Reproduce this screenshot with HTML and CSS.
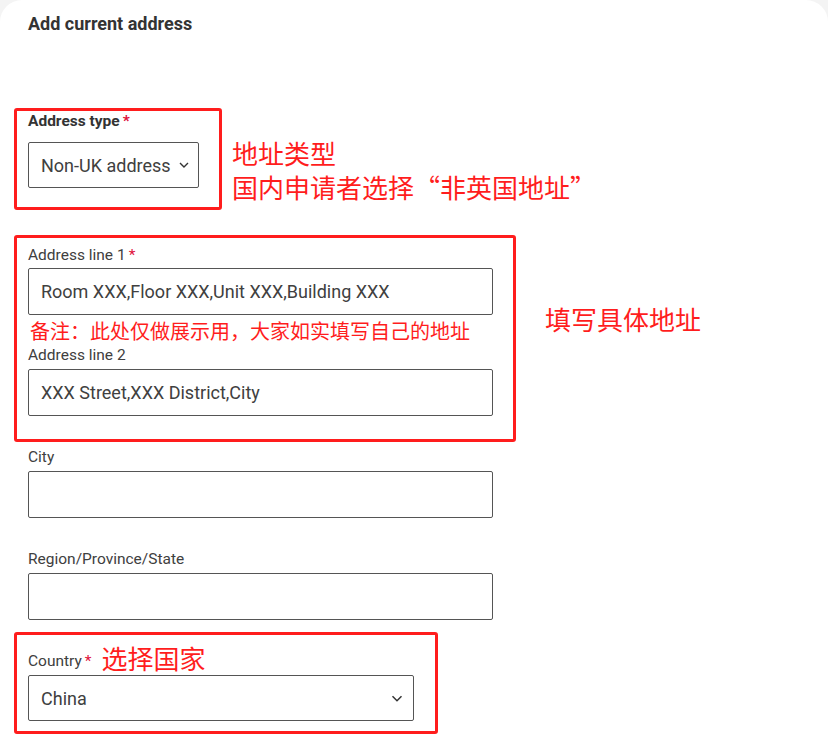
FILE: index.html
```html
<!DOCTYPE html>
<html lang="en">
<head>
<meta charset="utf-8">
<title>Add current address</title>
<link rel="stylesheet" href="styles.css">
</head>
<body>
<div class="card">
  <h1 class="title">Add current address</h1>

  <div class="row row-type">
    <div class="mark mark-type">
      <div class="label label-bold">Address type<span class="req">*</span></div>
      <div class="select select-type">
        <span>Non-UK address</span>
        <svg class="chev" width="10" height="6" viewBox="0 0 10 6"><path d="M1 1l4 4 4-4" fill="none" stroke="#333" stroke-width="1.4"/></svg>
      </div>
    </div>
    <div class="note-side note-type">
      <div>地址类型</div>
      <div>国内申请者选择“非英国地址”</div>
    </div>
  </div>

  <div class="row row-lines">
    <div class="mark mark-lines">
      <div class="label label-l1">Address line 1<span class="req">*</span></div>
      <div class="input"><span>Room XXX,Floor XXX,Unit XXX,Building XXX</span></div>
      <div class="remark">备注：此处仅做展示用，大家如实填写自己的地址</div>
      <div class="label label-l2">Address line 2</div>
      <div class="input"><span>XXX Street,XXX District,City</span></div>
    </div>
    <div class="note-side note-lines">填写具体地址</div>
  </div>

  <div class="field">
    <div class="label">City</div>
    <div class="input"></div>
  </div>
  <div class="field">
    <div class="label">Region/Province/State</div>
    <div class="input"></div>
  </div>

  <div class="mark mark-country">
    <div class="label-row">
      <div class="label">Country<span class="req">*</span></div>
      <div class="note-inline">选择国家</div>
    </div>
    <div class="select select-country">
      <span>China</span>
      <svg class="chev" width="12" height="7" viewBox="0 0 12 7"><path d="M1.5 1.2l4.5 4.5 4.5-4.5" fill="none" stroke="#333" stroke-width="1.5"/></svg>
    </div>
  </div>
</div>
</body>
</html>
```

FILE: styles.css
```css
* { box-sizing: border-box; }
html, body { margin: 0; padding: 0; background: #f4f4f4; }
body {
  font-family: Roboto, "Noto Sans", "Liberation Sans", sans-serif;
  color: #333;
}
.card {
  background: #fff;
  width: 828px;
  height: 754px;
  border-radius: 22px 22px 0 0;
  padding: 12px 0 0 14px;
  overflow: hidden;
}
.title {
  margin: 0 0 0 14px;
  font-size: 18px;
  line-height: 24px;
  font-weight: 700;
  color: #333;
}
.row { display: flex; align-items: flex-start; }
.row-type { margin-top: 72px; }
.row-lines { margin-top: 25px; }
.mark {
  border: 3px solid #ff1d1d;
  border-radius: 3px;
}
.mark-type { width: 208px; padding: 1px 0 19px 11px; }
.mark-lines { width: 502px; padding: 8px 0 23px 11px; }
.mark-country { width: 424px; padding: 16px 0 10px 11px; margin-top: 12px; }
.label {
  font-size: 15.5px;
  line-height: 18px;
  color: #404040;
}
.label-bold { font-weight: 700; color: #333; }
.req { color: #e0103a; margin-left: 3px; }
.select, .input {
  border: 1px solid #555;
  border-radius: 2px;
  height: 47px;
  font-size: 18px;
  color: #404040;
  display: flex;
  align-items: center;
  padding-left: 12px;
}
.select-type { width: 171px; margin-top: 12px; height: 46px; }
.select-type .chev { margin-left: 8px; }
.input { width: 465px; }
.label-l1 + .input { margin-top: 4px; }
.remark {
  color: #ff1d1d;
  font-family: "Noto Sans CJK SC", sans-serif;
  font-size: 20px;
  line-height: 24px;
  margin: 4px 0 0 2px;
}
.label-l2 { margin-top: 3px; }
.label-l2 + .input { margin-top: 5px; }
.note-side {
  color: #ff1d1d;
  font-family: "Noto Sans CJK SC", sans-serif;
  font-size: 26px;
  line-height: 34px;
}
.note-type { margin: 28px 0 0 10px; }
.note-lines { margin: 67px 0 0 29px; }
.field { padding-left: 14px; margin-top: 6px; }
.field + .field { margin-top: 32px; }
.field .input { margin-top: 5px; }
.label-row { display: flex; align-items: center; height: 20px; }
.note-inline {
  color: #ff1d1d;
  font-family: "Noto Sans CJK SC", sans-serif;
  font-size: 26px;
  line-height: 30px;
  margin-left: 10px;
  margin-top: -6px;
}
.select-country { width: 386px; margin-top: 4px; height: 46px; justify-content: space-between; padding-right: 10px; }
```
